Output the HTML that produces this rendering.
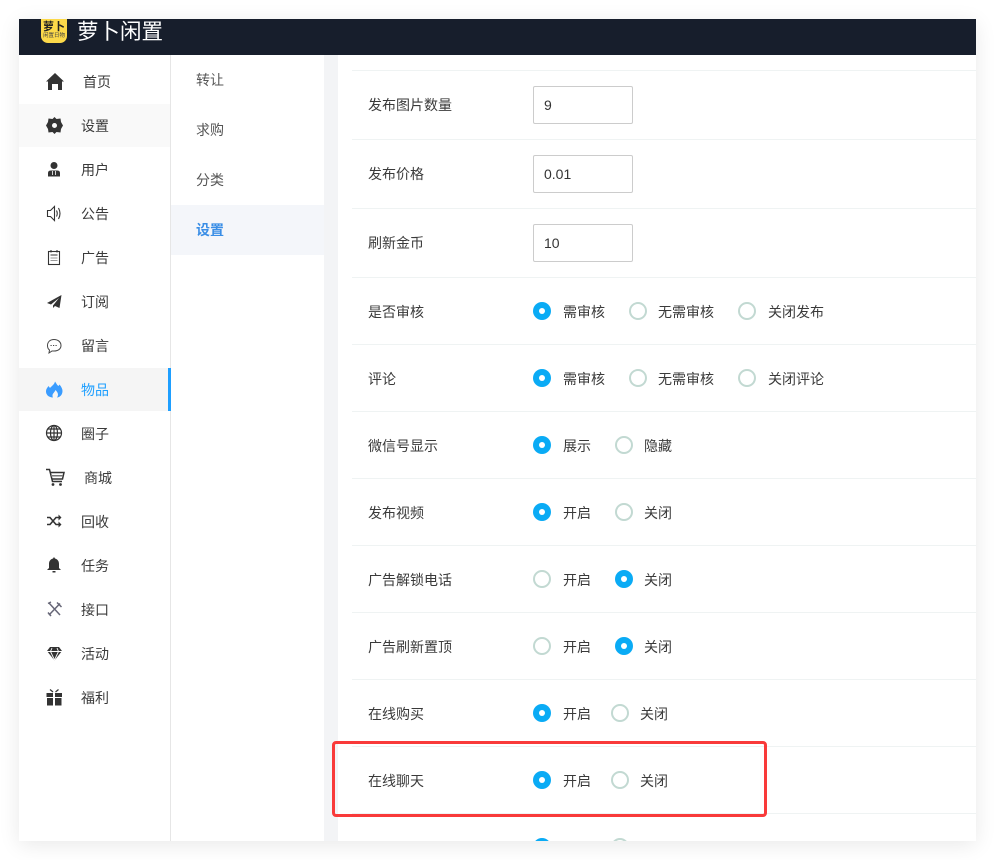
<!DOCTYPE html>
<html lang="zh">
<head>
<meta charset="utf-8">
<style>
html,body{margin:0;padding:0;background:#fff;}
body{width:995px;height:860px;position:relative;overflow:hidden;font-family:"Liberation Sans","Noto Sans CJK SC",sans-serif;font-size:14px;color:#3a3a3a;}
#frame{position:absolute;left:19px;top:19px;width:957px;height:822px;background:#fff;box-shadow:0 4px 20px rgba(0,0,0,.09);overflow:hidden;}
.abs,.t{position:absolute;}
.t{white-space:nowrap;line-height:20px;height:20px;}
.line{position:absolute;left:333px;width:624px;height:1px;background:#eff3f3;}
.in{position:absolute;left:514px;width:98px;height:36px;border:1px solid #ccc;border-radius:2px;line-height:36px;color:#333;background:#fff;}
.r{position:absolute;width:18px;height:18px;border-radius:50%;box-sizing:border-box;}
.on{background:#0aabf5;}
.on:after{content:"";position:absolute;left:6px;top:6px;width:6px;height:6px;background:#fff;border-radius:50%;}
.off{border:2px solid #c2d9d2;background:#fff;}
</style>
</head>
<body>
<div id="frame">
  <!-- header -->
  <div class="abs" style="left:0;top:0;width:957px;height:36px;background:#171e2c;overflow:hidden;">
    <div class="abs" style="left:22px;top:-8px;width:26px;height:32px;background:#fcd94a;border-radius:7px;overflow:hidden;">
      <div class="t" style="left:2px;top:10px;font-size:11px;font-weight:bold;color:#222;line-height:12px;height:12px;">萝卜</div>
      <div class="t" style="left:2px;top:21px;font-size:5.500px;color:#444;line-height:8px;height:8px;">闲置日物</div>
    </div>
    <div class="t" style="left:58px;top:-2px;font-size:21.500px;line-height:30px;height:30px;color:#fff;">萝卜闲置</div>
  </div>

  <!-- sidebars -->
  <div class="abs" style="left:0;top:85px;width:151px;height:43px;background:#f9f9f9;"></div>
  <div class="abs" style="left:0;top:349px;width:151px;height:43px;background:#f5f5f5;"></div>
  <div class="abs" style="left:151px;top:36px;width:1px;height:786px;background:#e6e6e6;"></div>
  <div class="abs" style="left:149px;top:349px;width:3px;height:43px;background:#1e9fff;"></div>
  <div class="abs" style="left:305px;top:36px;width:14px;height:786px;background:#f3f4f6;"></div>
  <div class="abs" style="left:152px;top:186px;width:153px;height:50px;background:#f4f6fa;"></div>

  <div class="t" style="left:64px;top:53px;">首页</div>
  <div class="t" style="left:62px;top:97px;">设置</div>
  <div class="t" style="left:62px;top:141px;">用户</div>
  <div class="t" style="left:62px;top:185px;">公告</div>
  <div class="t" style="left:62px;top:229px;">广告</div>
  <div class="t" style="left:62px;top:273px;">订阅</div>
  <div class="t" style="left:62px;top:317px;">留言</div>
  <div class="t" style="left:62px;top:361px;color:#1e9fff;">物品</div>
  <div class="t" style="left:62px;top:405px;">圈子</div>
  <div class="t" style="left:65px;top:449px;">商城</div>
  <div class="t" style="left:62px;top:493px;">回收</div>
  <div class="t" style="left:62px;top:537px;">任务</div>
  <div class="t" style="left:62px;top:581px;">接口</div>
  <div class="t" style="left:62px;top:625px;">活动</div>
  <div class="t" style="left:62px;top:669px;">福利</div>

  <div class="t" style="left:177px;top:51px;color:#555;">转让</div>
  <div class="t" style="left:177px;top:101px;color:#555;">求购</div>
  <div class="t" style="left:177px;top:151px;color:#555;">分类</div>
  <div class="t" style="left:177px;top:201px;color:#3a8ee6;font-weight:bold;">设置</div>

  <!-- row lines -->
  <div class="line" style="top:51px;"></div>
  <div class="line" style="top:120px;"></div>
  <div class="line" style="top:189px;"></div>
  <div class="line" style="top:258px;"></div>
  <div class="line" style="top:325px;"></div>
  <div class="line" style="top:392px;"></div>
  <div class="line" style="top:459px;"></div>
  <div class="line" style="top:526px;"></div>
  <div class="line" style="top:593px;"></div>
  <div class="line" style="top:660px;"></div>
  <div class="line" style="top:727px;"></div>
  <div class="line" style="top:794px;"></div>

  <!-- rows -->
  <div class="t" style="left:349px;top:76px;">发布图片数量</div>
  <div class="in" style="top:67px;text-indent:10px;">9</div>
  <div class="t" style="left:349px;top:145px;">发布价格</div>
  <div class="in" style="top:136px;text-indent:10px;">0.01</div>
  <div class="t" style="left:349px;top:214px;">刷新金币</div>
  <div class="in" style="top:205px;text-indent:10px;">10</div>

  <div class="t" style="left:349px;top:283px;">是否审核</div>
  <div class="r on" style="left:514px;top:283px;"></div><div class="t" style="left:544px;top:283px;">需审核</div>
  <div class="r off" style="left:610px;top:283px;"></div><div class="t" style="left:639px;top:283px;">无需审核</div>
  <div class="r off" style="left:719px;top:283px;"></div><div class="t" style="left:749px;top:283px;">关闭发布</div>

  <div class="t" style="left:349px;top:350px;">评论</div>
  <div class="r on" style="left:514px;top:350px;"></div><div class="t" style="left:544px;top:350px;">需审核</div>
  <div class="r off" style="left:610px;top:350px;"></div><div class="t" style="left:639px;top:350px;">无需审核</div>
  <div class="r off" style="left:719px;top:350px;"></div><div class="t" style="left:749px;top:350px;">关闭评论</div>

  <div class="t" style="left:349px;top:417px;">微信号显示</div>
  <div class="r on" style="left:514px;top:417px;"></div><div class="t" style="left:544px;top:417px;">展示</div>
  <div class="r off" style="left:596px;top:417px;"></div><div class="t" style="left:625px;top:417px;">隐藏</div>

  <div class="t" style="left:349px;top:484px;">发布视频</div>
  <div class="r on" style="left:514px;top:484px;"></div><div class="t" style="left:544px;top:484px;">开启</div>
  <div class="r off" style="left:596px;top:484px;"></div><div class="t" style="left:625px;top:484px;">关闭</div>

  <div class="t" style="left:349px;top:551px;">广告解锁电话</div>
  <div class="r off" style="left:514px;top:551px;"></div><div class="t" style="left:544px;top:551px;">开启</div>
  <div class="r on" style="left:596px;top:551px;"></div><div class="t" style="left:625px;top:551px;">关闭</div>

  <div class="t" style="left:349px;top:618px;">广告刷新置顶</div>
  <div class="r off" style="left:514px;top:618px;"></div><div class="t" style="left:544px;top:618px;">开启</div>
  <div class="r on" style="left:596px;top:618px;"></div><div class="t" style="left:625px;top:618px;">关闭</div>

  <div class="t" style="left:349px;top:685px;">在线购买</div>
  <div class="r on" style="left:514px;top:685px;"></div><div class="t" style="left:544px;top:685px;">开启</div>
  <div class="r off" style="left:592px;top:685px;"></div><div class="t" style="left:621px;top:685px;">关闭</div>

  <div class="t" style="left:349px;top:752px;">在线聊天</div>
  <div class="r on" style="left:514px;top:752px;"></div><div class="t" style="left:544px;top:752px;">开启</div>
  <div class="r off" style="left:592px;top:752px;"></div><div class="t" style="left:621px;top:752px;">关闭</div>

  <div class="r on" style="left:514px;top:819px;"></div>
  <div class="r off" style="left:592px;top:819px;"></div>
</div>

<!-- icons (page coordinates) -->
<svg class="abs" style="left:0;top:0;" width="995" height="860" viewBox="0 0 995 860" fill="#333">
  <!-- home -->
  <path d="M55 73 L64 81.500 L62 81.500 L62 90 L58 90 L58 84 L52 84 L52 90 L48 90 L48 81.500 L46 81.500 Z"/>
  <!-- gear -->
  <path fill-rule="evenodd" d="M54.500 117 L56.500 119 L60.500 118.500 L61 122 L63 125.500 L61 129 L60.500 132.500 L56.500 132 L54.500 134 L52.500 132 L48.500 132.500 L48 129 L46 125.500 L48 122 L48.500 118.500 L52.500 119 Z M54.500 123 A2.500 2.500 0 1 0 54.501 128 A2.500 2.500 0 1 0 54.500 123 Z"/>
  <!-- user -->
  <circle cx="54" cy="165.500" r="3.500"/>
  <path d="M48 176.500 L48 173 Q48 170.500 51 170.500 L57 170.500 Q60 170.500 60 173 L60 176.500 Z"/>
  <path d="M52.500 171 L52.500 175 M55.500 171 L55.500 175" stroke="#fff" stroke-width=".8" fill="none"/>
  <!-- speaker -->
  <g fill="none" stroke="#333" stroke-width="1.100">
    <path d="M47.500 210.500 L50.500 210.500 L54.500 206.500 L54.500 220.500 L50.500 216.500 L47.500 216.500 Z"/>
    <path d="M56.500 210.500 Q58 213.500 56.500 216.500"/>
    <path d="M58.500 208 Q61.500 213.500 58.500 219"/>
  </g>
  <!-- notepad -->
  <g fill="none" stroke="#333" stroke-width="1.100">
    <rect x="48.500" y="251.500" width="11" height="13"/>
    <path d="M51 250 L51 252.500 M57 250 L57 252.500 M50.500 255 L57.500 255"/>
    <path d="M50.500 258 L57.500 258 M50.500 260.500 L57.500 260.500" stroke="#999"/>
  </g>
  <!-- plane -->
  <path d="M61.500 295 L47 303 L51 304.500 L59 298 L53 305.500 L53 308 L55 306 L59.500 308 Z"/>
  <!-- chat -->
  <path d="M54 339.500 C58 339.500 61 342 61 345.500 C61 349 58 351 54 351 L52 351 L49 353 L49.500 350 C48 349 47.500 347.500 47.500 345.500 C47.500 342 50 339.500 54 339.500 Z" fill="none" stroke="#444" stroke-width="1"/>
  <path d="M50.500 345.500 H58" stroke="#444" stroke-width="1" stroke-dasharray="1.200 1.300" fill="none"/>
  <!-- flame -->
  <path fill="#3a9cff" d="M55 381.500 C57 384.500 57.500 385.500 58.500 386 L59.500 384.500 C61.500 387 62.500 389 62.500 391 C62.500 395 59.500 397.500 57 397.500 C58.500 395.500 58.500 393 55.500 390 C54.500 392.500 52.500 393.500 52.500 395.500 C52.500 396.200 52.700 397 53 397.500 C49 397.500 46 395 46 391.500 C46 389 47.500 387.500 48.500 386 L50 388 C51.500 386 54.500 384.500 55 381.500 Z"/>
  <!-- globe -->
  <g fill="none" stroke="#333" stroke-width="1.200">
    <circle cx="54" cy="433" r="7.500"/>
    <ellipse cx="54" cy="433" rx="3.500" ry="7.500"/>
    <path d="M54 425.500 V440.500 M46.500 433 H61.500 M47.500 429 H60.500 M47.500 437 H60.500"/>
  </g>
  <!-- cart -->
  <g fill="none" stroke="#333" stroke-width="1.500">
    <path d="M46 469.500 L49.500 469.500 L52.500 481.500 L62 481.500"/>
    <path d="M50 472.500 L64 472.500 L62.500 479 L51.500 479"/>
  </g>
  <path d="M51 475 H63 V476.500 H51 Z" fill="#777"/>
  <circle cx="53" cy="484.500" r="1.400"/><circle cx="60.500" cy="484.500" r="1.400"/>
  <!-- shuffle -->
  <g fill="none" stroke="#333" stroke-width="1.600">
    <path d="M47 517.500 L50 517.500 L56 524.500 L59 524.500"/>
    <path d="M47 524.500 L50 524.500 L56 517.500 L59 517.500"/>
  </g>
  <path d="M58.500 514.500 L61.500 517.500 L58.500 520.500 Z M58.500 521.500 L61.500 524.500 L58.500 527.500 Z"/>
  <!-- bell -->
  <path d="M54 557 L55 558.500 C58 559.500 59 561.500 59 564 L59 568 L61 570 L47 570 L49 568 L49 564 C49 561.500 50 559.500 53 558.500 Z"/>
  <path d="M52.500 571 H55.500 V572.500 H52.500 Z"/>
  <!-- tools -->
  <g fill="none" stroke="#667" stroke-width="1.500">
    <path d="M49 603 L60 615"/>
    <path d="M60 603.500 L49 615"/>
    <path d="M57 602.500 L61.500 607"/>
    <path d="M48 612.500 L51 616"/>
    <path d="M48 603.500 L51 602"/>
  </g>
  <!-- diamond -->
  <path d="M50 647 L59 647 L62 651 L54.500 660.500 L47 651 Z"/>
  <path d="M47 651.500 H62 M52 648 L50.500 651.500 L54.500 660 L58.500 651.500 L57 648" fill="none" stroke="#fff" stroke-width=".9"/>
  <!-- gift -->
  <path d="M46.500 693 H53 V697 H46.500 Z M55 693 H62 V697 H55 Z M47 698 H53 V705.500 H47 Z M55 698 H61.500 V705.500 H55 Z"/>
  <path d="M50 689.500 L53 692 M58.500 689.500 L55.500 692" stroke="#333" stroke-width="1.200" fill="none"/>
  <!-- red highlight box -->
  <rect x="333.500" y="742.500" width="432" height="73" rx="2.500" fill="none" stroke="#f93a3a" stroke-width="3"/>
</svg>
</body>
</html>
